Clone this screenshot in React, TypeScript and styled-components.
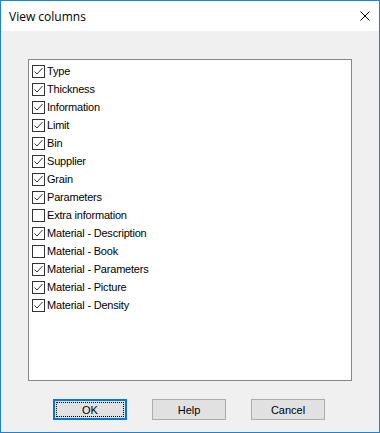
import React from "react";
import styled, { createGlobalStyle } from "styled-components";

const Global = createGlobalStyle`
  html, body { margin: 0; padding: 0; background: #ffffff; }
  #root { width: 380px; height: 433px; }
`;

const Window = styled.div`
  box-sizing: border-box;
  width: 380px;
  height: 433px;
  border: 1px solid #1883d7;
  background: #f0f0f0;
  display: flex;
  flex-direction: column;
`;

const TitleBar = styled.div`
  height: 30px;
  background: #ffffff;
  display: flex;
  align-items: center;
  justify-content: space-between;
  padding: 0 9px 0 8px;
  flex-shrink: 0;
`;

const Title = styled.span`
  font-family: "Open Sans", "Noto Sans", sans-serif;
  font-size: 12px;
  color: #000000;
  margin-top: 1px;
`;

const CloseIcon = styled.svg`
  width: 10px;
  height: 10px;
`;

const Body = styled.div`
  flex: 1;
  display: flex;
  flex-direction: column;
  padding: 28px 27px 0 27px;
`;

const ListBox = styled.div`
  box-sizing: border-box;
  width: 324px;
  height: 322px;
  background: #ffffff;
  border: 1px solid #828790;
  padding: 2px 3px;
  display: flex;
  flex-direction: column;
`;

const Row = styled.label`
  display: flex;
  align-items: center;
  height: 18px;
  font-family: "Liberation Sans", Arial, sans-serif;
  font-size: 11px;
  color: #000000;
`;

const Box = styled.span`
  box-sizing: border-box;
  width: 13px;
  height: 13px;
  border: 1px solid #333333;
  background: #ffffff;
  display: flex;
  align-items: center;
  justify-content: center;
  margin-right: 2px;
  flex-shrink: 0;
`;

const Label = styled.span`
  letter-spacing: -0.2px;
  white-space: nowrap;
`;

const ButtonRow = styled.div`
  display: flex;
  gap: 25px;
  padding: 18px 0 0 25px;
`;

const Button = styled.div<{ $default?: boolean }>`
  box-sizing: border-box;
  width: 74px;
  height: 21px;
  background: #e1e1e1;
  border: ${(p) => (p.$default ? "2px solid #0078d7" : "1px solid #adadad")};
  display: flex;
  align-items: center;
  justify-content: center;
  font-family: "Liberation Sans", Arial, sans-serif;
  font-size: 11px;
  color: #000000;
  position: relative;
`;

const FocusRect = styled.span`
  position: absolute;
  inset: 1px;
  border: 1px dotted #000000;
`;

const items: [string, boolean][] = [
  ["Type", true],
  ["Thickness", true],
  ["Information", true],
  ["Limit", true],
  ["Bin", true],
  ["Supplier", true],
  ["Grain", true],
  ["Parameters", true],
  ["Extra information", false],
  ["Material - Description", true],
  ["Material - Book", false],
  ["Material - Parameters", true],
  ["Material - Picture", true],
  ["Material - Density", true],
];

const Check = () => (
  <svg width="11" height="11" viewBox="0 0 11 11">
    <path d="M1.5 5.5 L4 8 L9.5 2" fill="none" stroke="#333333" strokeWidth="1" />
  </svg>
);

export default function App() {
  return (
    <>
      <Global />
      <Window>
        <TitleBar>
          <Title>View columns</Title>
          <CloseIcon viewBox="0 0 10 10">
            <path d="M0.5 0.5 L9.5 9.5 M9.5 0.5 L0.5 9.5" stroke="#000000" strokeWidth="1" />
          </CloseIcon>
        </TitleBar>
        <Body>
          <ListBox>
            {items.map(([name, checked]) => (
              <Row key={name}>
                <Box>{checked && <Check />}</Box>
                <Label>{name}</Label>
              </Row>
            ))}
          </ListBox>
          <ButtonRow>
            <Button $default>
              <FocusRect />
              OK
            </Button>
            <Button>Help</Button>
            <Button>Cancel</Button>
          </ButtonRow>
        </Body>
      </Window>
    </>
  );
}
